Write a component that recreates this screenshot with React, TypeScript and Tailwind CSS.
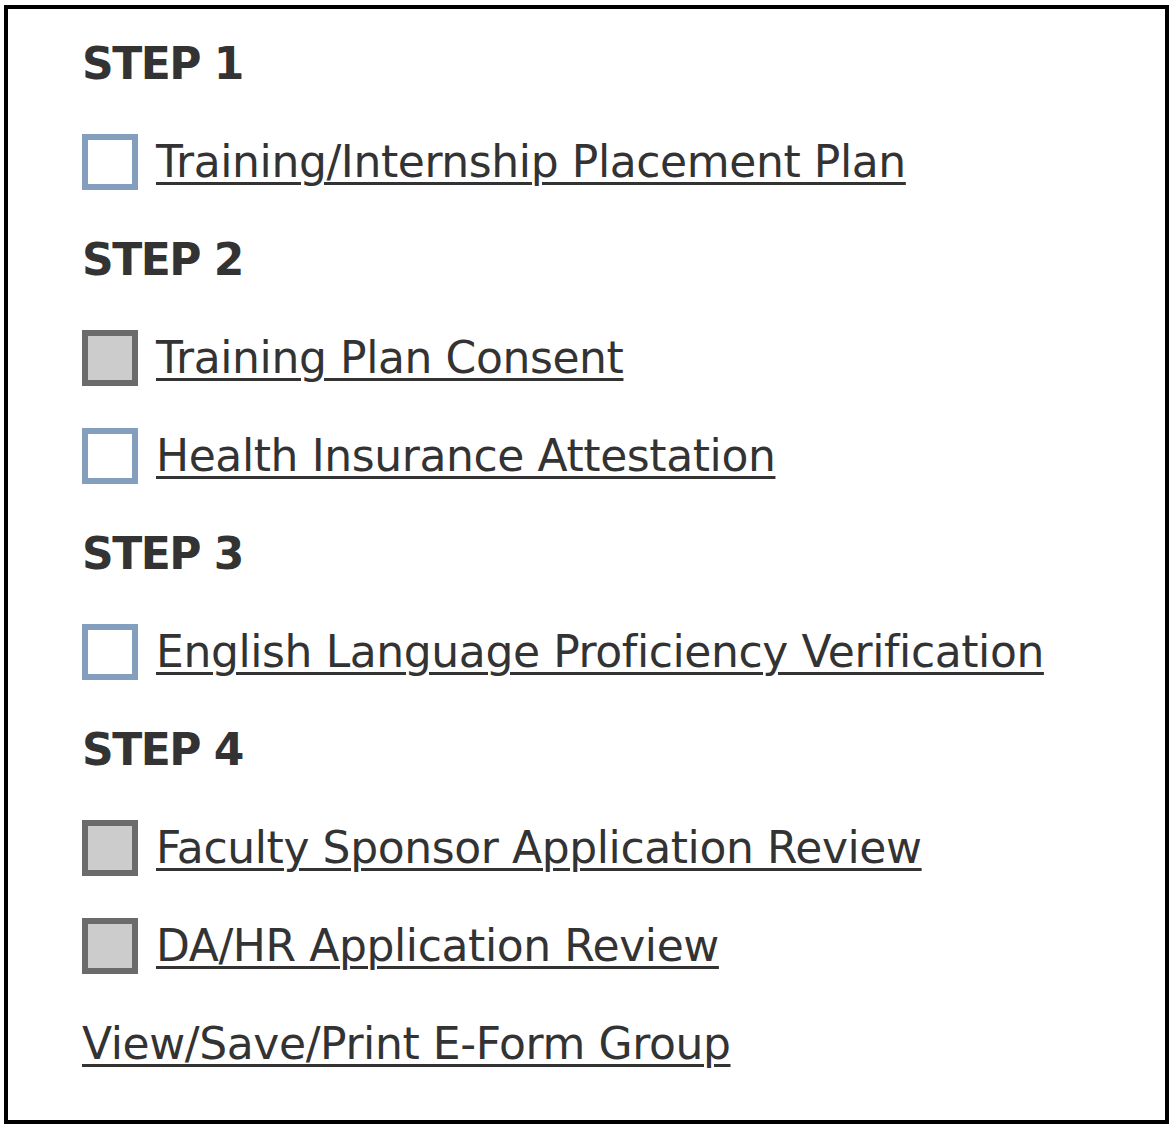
import React from 'react'

type Row =
    | { kind: 'step'; label: string }
    | { kind: 'item'; label: string; done: boolean }
    | { kind: 'link'; label: string }

const rows: Row[] = [
    { kind: 'step', label: 'STEP 1' },
    { kind: 'item', label: 'Training/Internship Placement Plan', done: false },
    { kind: 'step', label: 'STEP 2' },
    { kind: 'item', label: 'Training Plan Consent', done: true },
    { kind: 'item', label: 'Health Insurance Attestation', done: false },
    { kind: 'step', label: 'STEP 3' },
    { kind: 'item', label: 'English Language Proficiency Verification', done: false },
    { kind: 'step', label: 'STEP 4' },
    { kind: 'item', label: 'Faculty Sponsor Application Review', done: true },
    { kind: 'item', label: 'DA/HR Application Review', done: true },
    { kind: 'link', label: 'View/Save/Print E-Form Group' },
]

const linkCls =
    'underline decoration-[3px] underline-offset-[5px] text-[#333] leading-[98px] text-[44px] tracking-[-0.4px] whitespace-nowrap'

const App = () => {
    return (
        <div className="w-[1176px] h-[1130px] bg-white pt-[5px] pl-[4px] font-['DejaVu_Sans',sans-serif]">
            <div className="w-[1165px] h-[1119px] border-4 border-black pt-[6px] pl-[74px]">
                {rows.map((row, i) => {
                    if (row.kind === 'step') {
                        return (
                            <div key={i} className="h-[98px] flex items-center">
                                <span className="text-[44px] leading-[98px] font-bold tracking-[-1.5px] text-[#333]">
                                    {row.label}
                                </span>
                            </div>
                        )
                    }
                    if (row.kind === 'link') {
                        return (
                            <div key={i} className="h-[98px] flex items-center">
                                <a className={linkCls}>{row.label}</a>
                            </div>
                        )
                    }
                    return (
                        <div key={i} className="h-[98px] flex items-center gap-[18px]">
                            {/* status box */}
                            <div
                                className={
                                    row.done
                                        ? 'w-[56px] h-[56px] border-[6px] border-[#6b6b6b] bg-[#cccccc]'
                                        : 'w-[56px] h-[56px] border-[6px] border-[#849fbe] bg-white'
                                }
                            />
                            <a className={linkCls}>{row.label}</a>
                        </div>
                    )
                })}
            </div>
        </div>
    )
}

export default App
